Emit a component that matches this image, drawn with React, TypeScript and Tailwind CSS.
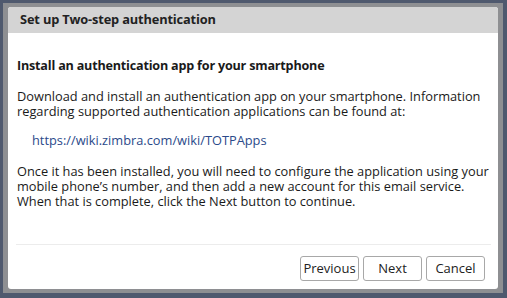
export default function App() {
  return (
    <div className="w-[507px] h-[298px] bg-[#4f596e] p-[3px] overflow-hidden" style={{ fontFamily: '"Open Sans", "Noto Sans", sans-serif' }}>
      <div className="w-[500px] h-[290px] bg-[#8e8f92] pl-[5px] pr-[5px] pt-[4px] pb-[4px]">
        <div className="h-full bg-white rounded-[3px] flex flex-col overflow-hidden">
          <div className="h-[26px] bg-[#d4d4d4] flex items-center pl-[12px] text-[12.8px] font-bold tracking-[-0.15px] text-[#222]">
            Set up Two-step authentication
          </div>
          <div className="flex-1 flex flex-col px-[9px] pt-[25px] text-[12.8px] text-[#1a1a1a]">
            <div className="font-bold leading-[16px] text-[12.6px] tracking-[-0.2px]">Install an authentication app for your smartphone</div>
            <p className="mt-[15px] leading-[15px]">
              Download and install an authentication app on your smartphone. Information regarding supported authentication applications can be found at:
            </p>
            <a className="mt-[14px] ml-[15px] leading-[15px] text-[#2b4a8a]">https://wiki.zimbra.com/wiki/TOTPApps</a>
            <p className="mt-[16px] leading-[15px]">
              Once it has been installed, you will need to configure the application using your mobile phone’s number, and then add a new account for this email service. When that is complete, click the Next button to continue.
            </p>
            <div className="mt-auto border-t border-[#ececec] mx-[-1px] mr-[-2px] flex justify-end gap-[4px] pt-[11px] pb-[8px] pr-[6px]">
              <button className="w-[59px] h-[25px] border border-[#a8a8a8] rounded-[3px] bg-white text-[13px] text-[#222]">Previous</button>
              <button className="w-[59px] h-[25px] border border-[#a8a8a8] rounded-[3px] bg-white text-[13px] text-[#222]">Next</button>
              <button className="w-[59px] h-[25px] border border-[#a8a8a8] rounded-[3px] bg-white text-[13px] text-[#222]">Cancel</button>
            </div>
          </div>
        </div>
      </div>
    </div>
  );
}
